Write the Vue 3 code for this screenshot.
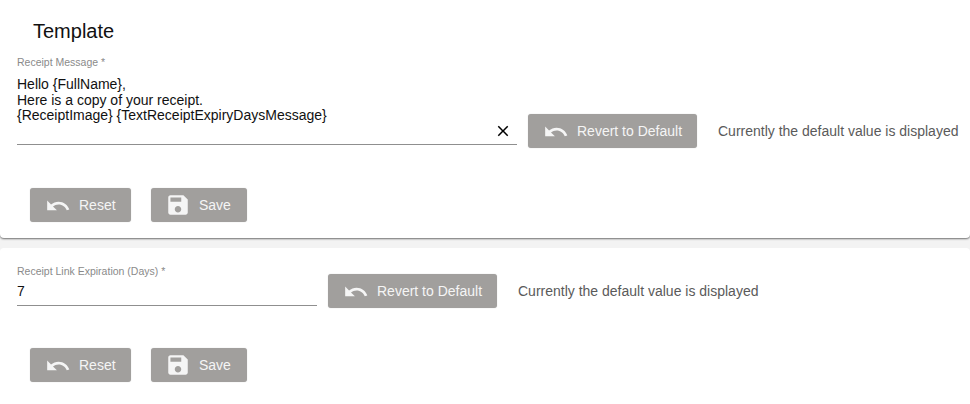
<script setup>
const undoPath = 'M12.5 8c-2.65 0-5.05.99-6.9 2.6L2 7v9h9l-3.62-3.62c1.39-1.16 3.16-1.88 5.12-1.88 3.54 0 6.55 2.31 7.6 5.5l2.37-.78C21.08 11.03 17.15 8 12.5 8z'
const savePath = 'M17 3H5c-1.11 0-2 .9-2 2v14c0 1.1.89 2 2 2h14c1.1 0 2-.9 2-2V7l-4-4zm-5 16c-1.66 0-3-1.34-3-3s1.34-3 3-3 3 1.34 3 3-1.34 3-3 3zm3-10H5V5h10v4z'
const defaultNote = 'Currently the default value is displayed'
</script>

<template>
  <div class="page">
    <section class="card card-template">
      <h2 class="card-title">Template</h2>
      <div class="field-row">
        <div class="field field-wide">
          <label class="field-label">Receipt Message *</label>
          <div class="field-value multi">
            <div>Hello {FullName},</div>
            <div>Here is a copy of your receipt.</div>
            <div>{ReceiptImage} {TextReceiptExpiryDaysMessage}</div>
          </div>
          <svg class="clear" viewBox="0 0 24 24"><path d="M19 6.41 17.59 5 12 10.59 6.41 5 5 6.41 10.59 12 5 17.59 6.41 19 12 13.41 17.59 19 19 17.59 13.41 12z" /></svg>
        </div>
        <button class="btn btn-revert" type="button">
          <svg viewBox="0 0 24 24"><path :d="undoPath" /></svg>Revert to Default
        </button>
        <span class="note">{{ defaultNote }}</span>
      </div>
      <div class="actions">
        <button class="btn btn-reset" type="button">
          <svg viewBox="0 0 24 24"><path :d="undoPath" /></svg>Reset
        </button>
        <button class="btn btn-save" type="button">
          <svg viewBox="0 0 24 24"><path :d="savePath" /></svg>Save
        </button>
      </div>
    </section>

    <section class="card card-expiry">
      <div class="field-row">
        <div class="field field-short">
          <label class="field-label">Receipt Link Expiration (Days) *</label>
          <div class="field-value">7</div>
        </div>
        <button class="btn btn-revert" type="button">
          <svg viewBox="0 0 24 24"><path :d="undoPath" /></svg>Revert to Default
        </button>
        <span class="note">{{ defaultNote }}</span>
      </div>
      <div class="actions">
        <button class="btn btn-reset" type="button">
          <svg viewBox="0 0 24 24"><path :d="undoPath" /></svg>Reset
        </button>
        <button class="btn btn-save" type="button">
          <svg viewBox="0 0 24 24"><path :d="savePath" /></svg>Save
        </button>
      </div>
    </section>
  </div>
</template>

<style>
html, body { background: #f3f3f3; }
</style>

<style scoped>
.page {
  width: 970px;
  height: 404px;
  overflow: hidden;
  background: #f3f3f3;
  font-family: "Liberation Sans", Arial, sans-serif;
}
.card {
  box-sizing: border-box;
  background: #fff;
  padding: 0 0 0 17px;
}
.card-template {
  height: 238px;
  border-radius: 0 0 4px 4px;
  box-shadow: 0 1px 2px rgba(0,0,0,.55);
  padding-top: 19px;
}
.card-expiry {
  height: 156px;
  margin-top: 10px;
  padding-top: 17px;
  border-radius: 4px 4px 0 0;
}
.card-title {
  margin: 0 0 0 16px;
  font-size: 20px;
  font-weight: 400;
  line-height: 24px;
  color: #111;
}
.field-row {
  display: flex;
  align-items: flex-end;
}
.card-template .field-row { margin-top: 13px; }
.field {
  position: relative;
  border-bottom: 1px solid #8f8f8f;
  box-sizing: border-box;
}
.field-wide { width: 500px; height: 89px; }
.field-short { width: 300px; height: 41px; }
.field-label {
  display: block;
  font-size: 10.5px;
  line-height: 12px;
  color: #8a8a8a;
}
.field-value {
  margin-top: 6px;
  font-size: 14px;
  line-height: 16px;
  color: #111;
}
.multi { margin-top: 9px; line-height: 15.6px; }
.clear {
  position: absolute;
  right: 5px;
  top: 66px;
  width: 18px;
  height: 18px;
  fill: #000;
}
.btn {
  display: flex;
  align-items: center;
  height: 34px;
  padding: 0;
  border: 0;
  border-radius: 3px;
  background: #a19f9d;
  color: #f5f5f5;
  font-family: inherit;
  font-size: 14px;
  box-shadow: 0 0 1px rgba(0,0,0,.25);
}
.btn svg {
  width: 26px;
  height: 26px;
  margin-top: 1px;
  fill: #f5f5f5;
  flex-shrink: 0;
}
.btn-revert {
  width: 169px;
  margin-left: 11px;
  margin-bottom: -3px;
  padding-left: 14.8px;
}
.card-expiry .btn-revert { margin-bottom: -2px; }
.btn-revert svg { margin-right: 8.2px; }
.note {
  margin-left: 21px;
  align-self: flex-end;
  margin-bottom: 6px;
  font-size: 14px;
  line-height: 16px;
  color: #5a5a5a;
}
.card-expiry .note { margin-bottom: 7px; }
.actions {
  display: flex;
  gap: 20px;
  margin-left: 13px;
  margin-top: 43px;
}
.card-expiry .actions { margin-top: 42px; }
.btn-reset { width: 101px; padding-left: 14.8px; }
.btn-reset svg { margin-right: 8.2px; }
.btn-save { width: 96px; padding-left: 13.7px; }
.btn-save svg { margin-top: 0; margin-right: 8.3px; }
</style>
